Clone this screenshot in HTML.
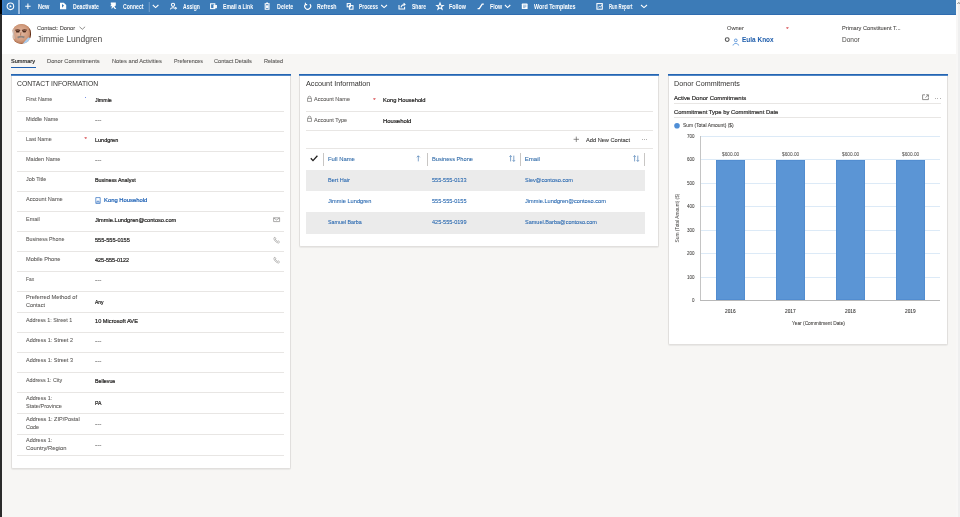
<!DOCTYPE html>
<html><head><meta charset="utf-8"><style>
html,body{margin:0;padding:0;}
body{width:960px;height:517px;overflow:hidden;position:relative;background:#f7f6f4;font-family:"Liberation Sans", sans-serif;}
.t{position:absolute;white-space:nowrap;}
svg{position:absolute;overflow:visible;}
</style></head><body><div id="w" style="position:absolute;left:0;top:0;width:960px;height:517px;will-change:transform">
<div style="position:absolute;left:0px;top:0px;width:2px;height:517px;background:#2b2b2b"></div>
<div style="position:absolute;left:0px;top:0px;width:2px;height:14px;background:#000"></div>
<div style="position:absolute;left:956px;top:0px;width:4px;height:517px;background:#efefef"></div>
<div style="position:absolute;left:956px;top:0px;width:1.5px;height:517px;background:#f8f7f6"></div>
<svg style="left:957px;top:1px" width="3" height="4" viewBox="0 0 3 4"><path d="M0.4 3 L1.8 1.4 L3.2 3" stroke="#777" stroke-width="0.9" fill="none"/></svg>
<div style="position:absolute;left:2px;top:0px;width:954px;height:14px;background:#3c7bb7"></div>
<div style="position:absolute;left:2px;top:14px;width:954px;height:1px;background:#2f6caf"></div>
<div style="position:absolute;left:2px;top:0px;width:2px;height:14px;background:#3f80c4"></div>
<div style="position:absolute;left:18px;top:0px;width:2px;height:14px;background:#9cbde0"></div>
<div style="position:absolute;left:20px;top:0px;width:1px;height:14px;background:#316fb0"></div>
<div style="position:absolute;left:2px;top:15px;width:954px;height:39px;background:#fff"></div>
<div class="t" style="left:37.50px;top:4.00px;font-size:6.3px;line-height:6.3px;color:#ffffff;font-weight:700;transform:scaleX(0.8813);transform-origin:0 0;">New</div>
<div class="t" style="left:72.50px;top:4.00px;font-size:6.3px;line-height:6.3px;color:#ffffff;font-weight:700;transform:scaleX(0.8219);transform-origin:0 0;">Deactivate</div>
<div class="t" style="left:122.50px;top:4.00px;font-size:6.3px;line-height:6.3px;color:#ffffff;font-weight:700;transform:scaleX(0.8126);transform-origin:0 0;">Connect</div>
<div class="t" style="left:182.90px;top:4.00px;font-size:6.3px;line-height:6.3px;color:#ffffff;font-weight:700;transform:scaleX(0.7992);transform-origin:0 0;">Assign</div>
<div class="t" style="left:222.80px;top:4.00px;font-size:6.3px;line-height:6.3px;color:#ffffff;font-weight:700;transform:scaleX(0.8163);transform-origin:0 0;">Email a Link</div>
<div class="t" style="left:276.60px;top:4.00px;font-size:6.3px;line-height:6.3px;color:#ffffff;font-weight:700;transform:scaleX(0.8558);transform-origin:0 0;">Delete</div>
<div class="t" style="left:316.60px;top:4.00px;font-size:6.3px;line-height:6.3px;color:#ffffff;font-weight:700;transform:scaleX(0.8347);transform-origin:0 0;">Refresh</div>
<div class="t" style="left:359.00px;top:4.00px;font-size:6.3px;line-height:6.3px;color:#ffffff;font-weight:700;transform:scaleX(0.7759);transform-origin:0 0;">Process</div>
<div class="t" style="left:411.60px;top:4.00px;font-size:6.3px;line-height:6.3px;color:#ffffff;font-weight:700;transform:scaleX(0.8000);transform-origin:0 0;">Share</div>
<div class="t" style="left:449.00px;top:4.00px;font-size:6.3px;line-height:6.3px;color:#ffffff;font-weight:700;transform:scaleX(0.8484);transform-origin:0 0;">Follow</div>
<div class="t" style="left:489.50px;top:4.00px;font-size:6.3px;line-height:6.3px;color:#ffffff;font-weight:700;transform:scaleX(0.8447);transform-origin:0 0;">Flow</div>
<div class="t" style="left:534.00px;top:4.00px;font-size:6.3px;line-height:6.3px;color:#ffffff;font-weight:700;transform:scaleX(0.8589);transform-origin:0 0;">Word Templates</div>
<div class="t" style="left:608.80px;top:4.00px;font-size:6.3px;line-height:6.3px;color:#ffffff;font-weight:700;transform:scaleX(0.6822);transform-origin:0 0;">Run Report</div>
<svg style="left:0px;top:0px" width="960" height="14" viewBox="0 0 960 14"><circle cx="10.4" cy="6.3" r="3.3" stroke="#fff" stroke-width="1.05" fill="none"/><path d="M9.6 4.8 L11.8 6.3 L9.6 7.8Z" fill="#fff"/><path d="M27.9 3.6 V9 M25.2 6.3 H30.6" stroke="#fff" stroke-width="1.05" fill="none"/><path d="M60 2.8 H63.8 L66.2 5 V9.2 H60Z" fill="#fff"/><path d="M62 4 V7.8 L64 5.6Z" fill="#3c7bb7"/><path d="M110.8 2.6 H115.8 V5.6 L114.4 6.4 L116.3 9 H114.8 L113.2 7 L112.2 8.6 H111.2 L112.2 6.2 L110.2 6.2 L111.4 4.6 L110.8 4.2Z" fill="#fff"/><path d="M152.8 5 L155.6 7.6 L158.4 5" stroke="#fff" stroke-width="1.05" fill="none"/><rect x="148.8" y="2" width="0.8" height="10" fill="#7fa6d3"/><circle cx="173" cy="4.8" r="1.6" stroke="#fff" stroke-width="1.05" fill="none"/><path d="M170.4 9.3 C170.8 7.2 175.2 7.2 175.6 9.3 M175.3 7.2 L176.8 8.7" stroke="#fff" stroke-width="1.05" fill="none"/><rect x="210.6" y="3.8" width="4.2" height="4.8" stroke="#fff" stroke-width="1.05" fill="none"/><rect x="213.4" y="5" width="3.6" height="3.2" fill="#fff" opacity="0.9"/><path d="M264.6 3.8 H269.6 M265.2 3.8 V9.2 H269 V3.8 M266.2 2.9 H268 M266.6 5.2 V8 M267.7 5.2 V8" stroke="#fff" stroke-width="1.05" fill="none"/><path d="M309.9 4.2 A3 3 0 1 1 305.6 4.1 M305.4 2.8 V4.6 H307.2" stroke="#fff" stroke-width="1.05" fill="none"/><rect x="347.2" y="3.6" width="3.2" height="3.2" stroke="#fff" stroke-width="1.05" fill="none"/><rect x="349.4" y="5.6" width="3.6" height="3.6" stroke="#fff" stroke-width="1.05" fill="none"/><path d="M381.2 5 L384.1 7.6 L387 5" stroke="#fff" stroke-width="1.05" fill="none"/><path d="M399 5 V9 H404.6 V6.8 M401 7.4 C401.4 5 403 4.4 405 4.4 M403.6 3.2 L405 4.4 L403.6 5.6" stroke="#fff" stroke-width="1.05" fill="none"/><path d="M440 3 L440.9 5.3 L443.3 5.4 L441.4 6.9 L442.1 9.3 L440 7.9 L437.9 9.3 L438.6 6.9 L436.7 5.4 L439.1 5.3Z" stroke="#fff" stroke-width="1.05" fill="none"/><path d="M477.6 8.6 L479.3 8.6 L482.2 4.2 L483.8 4.2" stroke="#fff" stroke-width="1.3" fill="none"/><path d="M504.9 5 L507.6 7.6 L510.3 5" stroke="#fff" stroke-width="1.05" fill="none"/><rect x="521.8" y="3.6" width="5.8" height="5.4" rx="0.6" fill="#fff"/><path d="M523 5.2 H526.4 M523 6.4 H526.4 M523 7.6 H525.4" stroke="#3c7bb7" stroke-width="0.5"/><rect x="596.9" y="3.6" width="5.4" height="5.6" stroke="#fff" stroke-width="1.05" fill="none"/><path d="M598.2 7.6 L599.4 6.2 L600.6 7 L601.8 4.8" stroke="#fff" stroke-width="0.8" fill="none"/><path d="M641 5 L644 7.6 L647 5" stroke="#fff" stroke-width="1.05" fill="none"/></svg>
<div style="position:absolute;left:11.7px;top:24.4px;width:19.8px;height:19.8px;border-radius:50%;overflow:hidden;background:#cf9778"><svg style="left:-0.7px;top:-0.4px;filter:blur(0.35px)" width="21" height="21" viewBox="0 0 21 21"><defs><radialGradient id="sk" cx="0.45" cy="0.42" r="0.62"><stop offset="0" stop-color="#e4bca6"/><stop offset="0.6" stop-color="#d09a7c"/><stop offset="1" stop-color="#a8643f"/></radialGradient></defs><rect width="21" height="21" fill="url(#sk)"/><path d="M0 3 Q3.6 10 1.8 19 L0 19Z" fill="#f4f1ef"/><path d="M2.8 5 Q2.2 10 3.4 15" stroke="#cbbfb8" stroke-width="1" fill="none"/><path d="M19 2.5 Q21.6 9 19.2 16" stroke="#5e2c16" stroke-width="2.6" fill="none"/><path d="M4.4 6.4 Q6.8 5.2 9.2 6.5 M11 6.5 Q13.4 5.2 15.8 6.3" stroke="#5a3222" stroke-width="1.2" fill="none"/><ellipse cx="6.8" cy="7.7" rx="1.9" ry="0.9" fill="#4a2a1c"/><ellipse cx="13.3" cy="7.6" rx="1.9" ry="0.9" fill="#4a2a1c"/><path d="M10 8.2 L9.5 11.5" stroke="#b47454" stroke-width="1" fill="none"/><path d="M6.6 13.6 Q10 11.8 13.4 13.4" stroke="#8c827c" stroke-width="1.8" fill="none"/><path d="M3 17.5 Q8 21.5 13 19.5" stroke="#9c5c3c" stroke-width="1.5" fill="none"/><path d="M10.5 21 L17.2 13.6 L21 14 L21 21Z" fill="#a8cdf0"/></svg></div>
<div class="t" style="left:36.90px;top:25.00px;font-size:6.1px;line-height:6.1px;color:#484644;font-weight:400;-webkit-text-stroke:0.08px #484644;transform:scaleX(0.9303);transform-origin:0 0;">Contact: Donor</div>
<svg style="left:79px;top:25.5px" width="7" height="4" viewBox="0 0 7 4"><path d="M0.5 0.8 L3.3 3.3 L6.1 0.8" stroke="#605e5c" stroke-width="0.7" fill="none"/></svg>
<div class="t" style="left:37.00px;top:34.00px;font-size:9.6px;line-height:9.6px;color:#4a4846;font-weight:400;transform:scaleX(0.8860);transform-origin:0 0;">Jimmie Lundgren</div>
<div class="t" style="left:726.90px;top:25.00px;font-size:6.1px;line-height:6.1px;color:#484644;font-weight:400;-webkit-text-stroke:0.08px #484644;transform:scaleX(0.9404);transform-origin:0 0;">Owner</div>
<div class="t" style="left:786.20px;top:26.00px;font-size:6px;line-height:6px;color:#d13438;font-weight:400;-webkit-text-stroke:0.08px #d13438;">*</div>
<div class="t" style="left:841.50px;top:25.00px;font-size:6.1px;line-height:6.1px;color:#484644;font-weight:400;-webkit-text-stroke:0.08px #484644;transform:scaleX(0.9256);transform-origin:0 0;">Primary Constituent T...</div>
<svg style="left:724px;top:36.5px" width="18" height="9" viewBox="0 0 18 9"><circle cx="3.2" cy="2.6" r="1.9" stroke="#555" stroke-width="1.1" fill="none"/><circle cx="11.8" cy="3.4" r="1.4" stroke="#2f7ad0" stroke-width="0.7" fill="none"/><path d="M9 8.5 C9.3 5.8 14.3 5.8 14.6 8.5" stroke="#2f7ad0" stroke-width="0.7" fill="none"/></svg>
<div class="t" style="left:741.70px;top:36.00px;font-size:7.3px;line-height:7.3px;color:#1d5cab;font-weight:700;transform:scaleX(0.8871);transform-origin:0 0;">Eula Knox</div>
<div class="t" style="left:841.50px;top:36.00px;font-size:7.3px;line-height:7.3px;color:#484644;font-weight:400;transform:scaleX(0.8951);transform-origin:0 0;">Donor</div>
<div class="t" style="left:10.80px;top:58.00px;font-size:6.1px;line-height:6.1px;color:#323130;font-weight:400;-webkit-text-stroke:0.22px #323130;transform:scaleX(0.9177);transform-origin:0 0;">Summary</div>
<div style="position:absolute;left:10.8px;top:66.8px;width:24.8px;height:1.5px;background:#1f5faf"></div>
<div class="t" style="left:47.30px;top:58.00px;font-size:6.1px;line-height:6.1px;color:#555351;font-weight:400;-webkit-text-stroke:0.08px #555351;transform:scaleX(0.9440);transform-origin:0 0;">Donor Commitments</div>
<div class="t" style="left:111.90px;top:58.00px;font-size:6.1px;line-height:6.1px;color:#555351;font-weight:400;-webkit-text-stroke:0.08px #555351;transform:scaleX(0.9352);transform-origin:0 0;">Notes and Activities</div>
<div class="t" style="left:173.50px;top:58.00px;font-size:6.1px;line-height:6.1px;color:#555351;font-weight:400;-webkit-text-stroke:0.08px #555351;transform:scaleX(0.8839);transform-origin:0 0;">Preferences</div>
<div class="t" style="left:214.20px;top:58.00px;font-size:6.1px;line-height:6.1px;color:#555351;font-weight:400;-webkit-text-stroke:0.08px #555351;transform:scaleX(0.9158);transform-origin:0 0;">Contact Details</div>
<div class="t" style="left:264.00px;top:58.00px;font-size:6.1px;line-height:6.1px;color:#555351;font-weight:400;-webkit-text-stroke:0.08px #555351;transform:scaleX(0.9071);transform-origin:0 0;">Related</div>
<div style="position:absolute;left:10.8px;top:73.5px;width:279.8px;height:395.8px;background:#fff;border:1px solid #e1dfdd;border-top:none;box-sizing:border-box;border-radius:0 0 2px 2px;box-shadow:0 0.5px 1px rgba(0,0,0,0.06)"></div>
<div style="position:absolute;left:10.8px;top:74px;width:279.8px;height:1px;background:#2565b2"></div>
<div style="position:absolute;left:10.8px;top:75px;width:279.8px;height:1px;background:#4f86c6"></div>
<div style="position:absolute;left:299px;top:73.5px;width:360px;height:173.5px;background:#fff;border:1px solid #e1dfdd;border-top:none;box-sizing:border-box;border-radius:0 0 2px 2px;box-shadow:0 0.5px 1px rgba(0,0,0,0.06)"></div>
<div style="position:absolute;left:299px;top:74px;width:360px;height:1px;background:#2565b2"></div>
<div style="position:absolute;left:299px;top:75px;width:360px;height:1px;background:#4f86c6"></div>
<div style="position:absolute;left:667.5px;top:73.5px;width:280px;height:271.5px;background:#fff;border:1px solid #e1dfdd;border-top:none;box-sizing:border-box;border-radius:0 0 2px 2px;box-shadow:0 0.5px 1px rgba(0,0,0,0.06)"></div>
<div style="position:absolute;left:667.5px;top:74px;width:280px;height:1px;background:#2565b2"></div>
<div style="position:absolute;left:667.5px;top:75px;width:280px;height:1px;background:#4f86c6"></div>
<div class="t" style="left:16.90px;top:80.00px;font-size:7.0px;line-height:7.0px;color:#323130;font-weight:400;transform:scaleX(0.9704);transform-origin:0 0;">CONTACT INFORMATION</div>
<div style="position:absolute;left:17px;top:110.5px;width:267px;height:1px;background:#e8e6e4"></div>
<div style="position:absolute;left:17px;top:130.5px;width:267px;height:1px;background:#e8e6e4"></div>
<div style="position:absolute;left:17px;top:150.5px;width:267px;height:1px;background:#e8e6e4"></div>
<div style="position:absolute;left:17px;top:170.5px;width:267px;height:1px;background:#e8e6e4"></div>
<div style="position:absolute;left:17px;top:190.5px;width:267px;height:1px;background:#e8e6e4"></div>
<div style="position:absolute;left:17px;top:210.5px;width:267px;height:1px;background:#e8e6e4"></div>
<div style="position:absolute;left:17px;top:230.5px;width:267px;height:1px;background:#e8e6e4"></div>
<div style="position:absolute;left:17px;top:250.5px;width:267px;height:1px;background:#e8e6e4"></div>
<div style="position:absolute;left:17px;top:270.5px;width:267px;height:1px;background:#e8e6e4"></div>
<div style="position:absolute;left:17px;top:290.5px;width:267px;height:1px;background:#e8e6e4"></div>
<div style="position:absolute;left:17px;top:311.5px;width:267px;height:1px;background:#e8e6e4"></div>
<div style="position:absolute;left:17px;top:331.5px;width:267px;height:1px;background:#e8e6e4"></div>
<div style="position:absolute;left:17px;top:351.5px;width:267px;height:1px;background:#e8e6e4"></div>
<div style="position:absolute;left:17px;top:371.5px;width:267px;height:1px;background:#e8e6e4"></div>
<div style="position:absolute;left:17px;top:391.5px;width:267px;height:1px;background:#e8e6e4"></div>
<div style="position:absolute;left:17px;top:412.5px;width:267px;height:1px;background:#e8e6e4"></div>
<div style="position:absolute;left:17px;top:433.5px;width:267px;height:1px;background:#e8e6e4"></div>
<div style="position:absolute;left:17px;top:454.5px;width:267px;height:1px;background:#e8e6e4"></div>
<div class="t" style="left:25.60px;top:96.00px;font-size:6.1px;line-height:6.1px;color:#5a5856;font-weight:400;-webkit-text-stroke:0.08px #5a5856;transform:scaleX(0.8847);transform-origin:0 0;">First Name</div>
<div class="t" style="left:94.60px;top:97.00px;font-size:6.1px;line-height:6.1px;color:#201f1e;font-weight:400;-webkit-text-stroke:0.22px #201f1e;transform:scaleX(0.8690);transform-origin:0 0;">Jimmie</div>
<div class="t" style="left:25.60px;top:116.00px;font-size:6.1px;line-height:6.1px;color:#5a5856;font-weight:400;-webkit-text-stroke:0.08px #5a5856;transform:scaleX(0.9000);transform-origin:0 0;">Middle Name</div>
<div class="t" style="left:94.60px;top:117.00px;font-size:6.1px;line-height:6.1px;color:#323130;font-weight:400;-webkit-text-stroke:0.08px #323130;transform:scaleX(1.0564);transform-origin:0 0;">---</div>
<div class="t" style="left:25.60px;top:136.00px;font-size:6.1px;line-height:6.1px;color:#5a5856;font-weight:400;-webkit-text-stroke:0.08px #5a5856;transform:scaleX(0.8711);transform-origin:0 0;">Last Name</div>
<div class="t" style="left:94.60px;top:137.00px;font-size:6.1px;line-height:6.1px;color:#201f1e;font-weight:400;-webkit-text-stroke:0.22px #201f1e;transform:scaleX(0.9000);transform-origin:0 0;">Lundgren</div>
<div class="t" style="left:25.60px;top:156.00px;font-size:6.1px;line-height:6.1px;color:#5a5856;font-weight:400;-webkit-text-stroke:0.08px #5a5856;transform:scaleX(0.9080);transform-origin:0 0;">Maiden Name</div>
<div class="t" style="left:94.60px;top:157.00px;font-size:6.1px;line-height:6.1px;color:#323130;font-weight:400;-webkit-text-stroke:0.08px #323130;transform:scaleX(1.0564);transform-origin:0 0;">---</div>
<div class="t" style="left:25.60px;top:176.00px;font-size:6.1px;line-height:6.1px;color:#5a5856;font-weight:400;-webkit-text-stroke:0.08px #5a5856;transform:scaleX(0.8926);transform-origin:0 0;">Job Title</div>
<div class="t" style="left:94.60px;top:177.00px;font-size:6.1px;line-height:6.1px;color:#201f1e;font-weight:400;-webkit-text-stroke:0.22px #201f1e;transform:scaleX(0.8821);transform-origin:0 0;">Business Analyst</div>
<div class="t" style="left:25.60px;top:196.00px;font-size:6.1px;line-height:6.1px;color:#5a5856;font-weight:400;-webkit-text-stroke:0.08px #5a5856;transform:scaleX(0.9192);transform-origin:0 0;">Account Name</div>
<svg style="left:94.5px;top:197px" width="7" height="7" viewBox="0 0 7 7"><path d="M0.8 0.6 H5.2 V6.4 H0.8Z M2 6.4 V4.2 H4 V6.4" stroke="#2f6fc0" stroke-width="0.7" fill="none"/></svg>
<div class="t" style="left:104.20px;top:197.00px;font-size:6.1px;line-height:6.1px;color:#1f62b5;font-weight:400;-webkit-text-stroke:0.22px #1f62b5;transform:scaleX(0.9581);transform-origin:0 0;">Kong Household</div>
<div class="t" style="left:25.60px;top:216.00px;font-size:6.1px;line-height:6.1px;color:#5a5856;font-weight:400;-webkit-text-stroke:0.08px #5a5856;transform:scaleX(0.9003);transform-origin:0 0;">Email</div>
<div class="t" style="left:94.60px;top:217.00px;font-size:6.1px;line-height:6.1px;color:#201f1e;font-weight:400;-webkit-text-stroke:0.22px #201f1e;transform:scaleX(0.9291);transform-origin:0 0;">Jimmie.Lundgren@contoso.com</div>
<div class="t" style="left:25.60px;top:236.00px;font-size:6.1px;line-height:6.1px;color:#5a5856;font-weight:400;-webkit-text-stroke:0.08px #5a5856;transform:scaleX(0.8712);transform-origin:0 0;">Business Phone</div>
<div class="t" style="left:94.60px;top:237.00px;font-size:6.1px;line-height:6.1px;color:#201f1e;font-weight:400;-webkit-text-stroke:0.22px #201f1e;transform:scaleX(0.9180);transform-origin:0 0;">555-555-0155</div>
<div class="t" style="left:25.60px;top:256.00px;font-size:6.1px;line-height:6.1px;color:#5a5856;font-weight:400;-webkit-text-stroke:0.08px #5a5856;transform:scaleX(0.9241);transform-origin:0 0;">Mobile Phone</div>
<div class="t" style="left:94.60px;top:257.00px;font-size:6.1px;line-height:6.1px;color:#201f1e;font-weight:400;-webkit-text-stroke:0.22px #201f1e;transform:scaleX(0.9000);transform-origin:0 0;">425-555-0122</div>
<div class="t" style="left:25.60px;top:276.00px;font-size:6.1px;line-height:6.1px;color:#5a5856;font-weight:400;-webkit-text-stroke:0.08px #5a5856;transform:scaleX(0.8011);transform-origin:0 0;">Fax</div>
<div class="t" style="left:94.60px;top:277.00px;font-size:6.1px;line-height:6.1px;color:#323130;font-weight:400;-webkit-text-stroke:0.08px #323130;transform:scaleX(1.0564);transform-origin:0 0;">---</div>
<div class="t" style="left:25.60px;top:294.00px;font-size:6.1px;line-height:6.1px;color:#5a5856;font-weight:400;-webkit-text-stroke:0.08px #5a5856;transform:scaleX(0.9412);transform-origin:0 0;">Preferred Method of</div>
<div class="t" style="left:25.60px;top:302.00px;font-size:6.1px;line-height:6.1px;color:#5a5856;font-weight:400;-webkit-text-stroke:0.08px #5a5856;transform:scaleX(0.9011);transform-origin:0 0;">Contact</div>
<div class="t" style="left:94.60px;top:299.00px;font-size:6.1px;line-height:6.1px;color:#201f1e;font-weight:400;-webkit-text-stroke:0.22px #201f1e;transform:scaleX(0.8207);transform-origin:0 0;">Any</div>
<div class="t" style="left:25.60px;top:317.00px;font-size:6.1px;line-height:6.1px;color:#5a5856;font-weight:400;-webkit-text-stroke:0.08px #5a5856;transform:scaleX(0.8849);transform-origin:0 0;">Address 1: Street 1</div>
<div class="t" style="left:94.60px;top:318.00px;font-size:6.1px;line-height:6.1px;color:#201f1e;font-weight:400;-webkit-text-stroke:0.22px #201f1e;transform:scaleX(0.9268);transform-origin:0 0;">10 Microsoft AVE</div>
<div class="t" style="left:25.60px;top:337.00px;font-size:6.1px;line-height:6.1px;color:#5a5856;font-weight:400;-webkit-text-stroke:0.08px #5a5856;transform:scaleX(0.9000);transform-origin:0 0;">Address 1: Street 2</div>
<div class="t" style="left:94.60px;top:338.00px;font-size:6.1px;line-height:6.1px;color:#323130;font-weight:400;-webkit-text-stroke:0.08px #323130;transform:scaleX(1.0564);transform-origin:0 0;">---</div>
<div class="t" style="left:25.60px;top:357.00px;font-size:6.1px;line-height:6.1px;color:#5a5856;font-weight:400;-webkit-text-stroke:0.08px #5a5856;transform:scaleX(0.9000);transform-origin:0 0;">Address 1: Street 3</div>
<div class="t" style="left:94.60px;top:358.00px;font-size:6.1px;line-height:6.1px;color:#323130;font-weight:400;-webkit-text-stroke:0.08px #323130;transform:scaleX(1.0564);transform-origin:0 0;">---</div>
<div class="t" style="left:25.60px;top:377.00px;font-size:6.1px;line-height:6.1px;color:#5a5856;font-weight:400;-webkit-text-stroke:0.08px #5a5856;transform:scaleX(0.8777);transform-origin:0 0;">Address 1: City</div>
<div class="t" style="left:94.60px;top:378.00px;font-size:6.1px;line-height:6.1px;color:#201f1e;font-weight:400;-webkit-text-stroke:0.22px #201f1e;transform:scaleX(0.8672);transform-origin:0 0;">Bellevue</div>
<div class="t" style="left:25.60px;top:395.00px;font-size:6.1px;line-height:6.1px;color:#5a5856;font-weight:400;-webkit-text-stroke:0.08px #5a5856;transform:scaleX(0.9000);transform-origin:0 0;">Address 1:</div>
<div class="t" style="left:25.60px;top:403.00px;font-size:6.1px;line-height:6.1px;color:#5a5856;font-weight:400;-webkit-text-stroke:0.08px #5a5856;transform:scaleX(0.9070);transform-origin:0 0;">State/Province</div>
<div class="t" style="left:94.60px;top:400.00px;font-size:6.1px;line-height:6.1px;color:#201f1e;font-weight:400;-webkit-text-stroke:0.22px #201f1e;transform:scaleX(0.8477);transform-origin:0 0;">PA</div>
<div class="t" style="left:25.60px;top:416.00px;font-size:6.1px;line-height:6.1px;color:#5a5856;font-weight:400;-webkit-text-stroke:0.08px #5a5856;transform:scaleX(0.9099);transform-origin:0 0;">Address 1: ZIP/Postal</div>
<div class="t" style="left:25.60px;top:424.00px;font-size:6.1px;line-height:6.1px;color:#5a5856;font-weight:400;-webkit-text-stroke:0.08px #5a5856;transform:scaleX(0.9000);transform-origin:0 0;">Code</div>
<div class="t" style="left:94.60px;top:421.00px;font-size:6.1px;line-height:6.1px;color:#323130;font-weight:400;-webkit-text-stroke:0.08px #323130;transform:scaleX(1.0564);transform-origin:0 0;">---</div>
<div class="t" style="left:25.60px;top:437.00px;font-size:6.1px;line-height:6.1px;color:#5a5856;font-weight:400;-webkit-text-stroke:0.08px #5a5856;transform:scaleX(0.9000);transform-origin:0 0;">Address 1:</div>
<div class="t" style="left:25.60px;top:445.00px;font-size:6.1px;line-height:6.1px;color:#5a5856;font-weight:400;-webkit-text-stroke:0.08px #5a5856;transform:scaleX(0.9535);transform-origin:0 0;">Country/Region</div>
<div class="t" style="left:94.60px;top:442.00px;font-size:6.1px;line-height:6.1px;color:#323130;font-weight:400;-webkit-text-stroke:0.08px #323130;transform:scaleX(1.0564);transform-origin:0 0;">---</div>
<div style="position:absolute;left:85.2px;top:96.8px;width:1px;height:1px;background:#4a6ee0;border-radius:50%"></div>
<div class="t" style="left:84.60px;top:136.00px;font-size:6px;line-height:6px;color:#d13438;font-weight:400;-webkit-text-stroke:0.08px #d13438;">*</div>
<svg style="left:273px;top:217px" width="8" height="7" viewBox="0 0 8 7"><path d="M0.6 0.8 H6.6 V4.6 H0.6Z M0.6 0.8 L3.6 3 L6.6 0.8" stroke="#8a8886" stroke-width="0.7" fill="none"/></svg>
<svg style="left:273px;top:236.5px" width="8" height="7" viewBox="0 0 8 7"><path d="M1 0.8 C0.5 2.5 2.5 5.5 5.5 6 L6.6 5 L5.2 3.8 L4.4 4.4 C3.5 4 2.6 3 2.2 2 L2.8 1.4 L1.8 0.2Z" stroke="#8a8886" stroke-width="0.6" fill="none"/></svg>
<svg style="left:273px;top:256.5px" width="8" height="7" viewBox="0 0 8 7"><path d="M1 0.8 C0.5 2.5 2.5 5.5 5.5 6 L6.6 5 L5.2 3.8 L4.4 4.4 C3.5 4 2.6 3 2.2 2 L2.8 1.4 L1.8 0.2Z" stroke="#8a8886" stroke-width="0.6" fill="none"/></svg>
<div class="t" style="left:305.50px;top:80.00px;font-size:7.0px;line-height:7.0px;color:#323130;font-weight:400;transform:scaleX(1.0343);transform-origin:0 0;">Account Information</div>
<svg style="left:306.8px;top:95.6px" width="5" height="6" viewBox="0 0 5 6"><path d="M1.1 2.4 V1.6 A1.4 1.4 0 0 1 3.9 1.6 V2.4 M0.5 2.4 H4.5 V5.4 H0.5Z" stroke="#605e5c" stroke-width="0.6" fill="none"/></svg>
<div class="t" style="left:313.90px;top:96.00px;font-size:6.1px;line-height:6.1px;color:#5a5856;font-weight:400;-webkit-text-stroke:0.08px #5a5856;transform:scaleX(0.9000);transform-origin:0 0;">Account Name</div>
<div class="t" style="left:382.80px;top:97.00px;font-size:6.1px;line-height:6.1px;color:#201f1e;font-weight:400;-webkit-text-stroke:0.22px #201f1e;transform:scaleX(0.9447);transform-origin:0 0;">Kong  Household</div>
<svg style="left:306.8px;top:116.3px" width="5" height="6" viewBox="0 0 5 6"><path d="M1.1 2.4 V1.6 A1.4 1.4 0 0 1 3.9 1.6 V2.4 M0.5 2.4 H4.5 V5.4 H0.5Z" stroke="#605e5c" stroke-width="0.6" fill="none"/></svg>
<div class="t" style="left:313.90px;top:117.00px;font-size:6.1px;line-height:6.1px;color:#5a5856;font-weight:400;-webkit-text-stroke:0.08px #5a5856;transform:scaleX(0.9000);transform-origin:0 0;">Account Type</div>
<div class="t" style="left:382.80px;top:118.00px;font-size:6.1px;line-height:6.1px;color:#201f1e;font-weight:400;-webkit-text-stroke:0.22px #201f1e;transform:scaleX(0.9740);transform-origin:0 0;">Household</div>
<div class="t" style="left:373.20px;top:97.00px;font-size:6px;line-height:6px;color:#d13438;font-weight:400;-webkit-text-stroke:0.08px #d13438;">*</div>
<div style="position:absolute;left:305.5px;top:110.7px;width:347.5px;height:1px;background:#e8e6e4"></div>
<div style="position:absolute;left:305.5px;top:130.2px;width:347.5px;height:1px;background:#e8e6e4"></div>
<svg style="left:573px;top:136px" width="7" height="7" viewBox="0 0 7 7"><path d="M3.3 0.6 V6 M0.6 3.3 H6" stroke="#605e5c" stroke-width="0.7"/></svg>
<div class="t" style="left:585.70px;top:137.00px;font-size:6.1px;line-height:6.1px;color:#323130;font-weight:400;-webkit-text-stroke:0.08px #323130;transform:scaleX(0.9282);transform-origin:0 0;">Add New Contact</div>
<div style="position:absolute;left:641.8000000000001px;top:139.1px;width:0.8px;height:0.8px;background:#8a8886;border-radius:50%"></div>
<div style="position:absolute;left:644.0px;top:139.1px;width:0.8px;height:0.8px;background:#8a8886;border-radius:50%"></div>
<div style="position:absolute;left:646.2px;top:139.1px;width:0.8px;height:0.8px;background:#8a8886;border-radius:50%"></div>
<div style="position:absolute;left:305.5px;top:147.6px;width:347.5px;height:1px;background:#e8e6e4"></div>
<svg style="left:310px;top:155px" width="9" height="7" viewBox="0 0 9 7"><path d="M0.8 3.2 L3 5.6 L7.4 0.8" stroke="#201f1e" stroke-width="1.3" fill="none"/></svg>
<div style="position:absolute;left:323.20000000000005px;top:153px;width:0.9px;height:12.5px;background:#c8c6c4"></div>
<div style="position:absolute;left:426.6px;top:153px;width:0.9px;height:12.5px;background:#c8c6c4"></div>
<div style="position:absolute;left:520.0px;top:153px;width:0.9px;height:12.5px;background:#c8c6c4"></div>
<div style="position:absolute;left:643.9px;top:153px;width:0.9px;height:12.5px;background:#c8c6c4"></div>
<div class="t" style="left:328.00px;top:156.00px;font-size:6.1px;line-height:6.1px;color:#2b67a6;font-weight:400;-webkit-text-stroke:0.08px #2b67a6;transform:scaleX(0.9691);transform-origin:0 0;">Full Name</div>
<div class="t" style="left:431.90px;top:156.00px;font-size:6.1px;line-height:6.1px;color:#2b67a6;font-weight:400;-webkit-text-stroke:0.08px #2b67a6;transform:scaleX(0.9294);transform-origin:0 0;">Business Phone</div>
<div class="t" style="left:524.70px;top:156.00px;font-size:6.1px;line-height:6.1px;color:#2b67a6;font-weight:400;-webkit-text-stroke:0.08px #2b67a6;">Email</div>
<svg style="left:416px;top:155px" width="5" height="7" viewBox="0 0 5 7"><path d="M2.3 6.4 V0.8 M0.8 2.3 L2.3 0.8 L3.8 2.3" stroke="#2b67a6" stroke-width="0.6" fill="none"/></svg>
<svg style="left:508.7px;top:154.8px" width="7" height="7" viewBox="0 0 7 7"><path d="M1.6 6.4 V0.6 M0.4 1.8 L1.6 0.6 L2.8 1.8 M4.8 0.6 V6.4 M3.6 5.2 L4.8 6.4 L6 5.2" stroke="#2b67a6" stroke-width="0.6" fill="none"/></svg>
<svg style="left:632.8px;top:154.8px" width="7" height="7" viewBox="0 0 7 7"><path d="M1.6 6.4 V0.6 M0.4 1.8 L1.6 0.6 L2.8 1.8 M4.8 0.6 V6.4 M3.6 5.2 L4.8 6.4 L6 5.2" stroke="#2b67a6" stroke-width="0.6" fill="none"/></svg>
<div style="position:absolute;left:305.5px;top:170px;width:339px;height:21.1px;background:#ebebeb"></div>
<div style="position:absolute;left:305.5px;top:212.3px;width:339px;height:21.4px;background:#ebebeb"></div>
<div class="t" style="left:328.00px;top:177.00px;font-size:6.1px;line-height:6.1px;color:#2364ae;font-weight:400;-webkit-text-stroke:0.08px #2364ae;transform:scaleX(0.9120);transform-origin:0 0;">Bert Hair</div>
<div class="t" style="left:431.60px;top:177.00px;font-size:6.1px;line-height:6.1px;color:#2364ae;font-weight:400;-webkit-text-stroke:0.08px #2364ae;transform:scaleX(0.9103);transform-origin:0 0;">555-555-0133</div>
<div class="t" style="left:524.70px;top:177.00px;font-size:6.1px;line-height:6.1px;color:#2364ae;font-weight:400;-webkit-text-stroke:0.08px #2364ae;transform:scaleX(0.9103);transform-origin:0 0;">Siev@contoso.com</div>
<div class="t" style="left:328.00px;top:198.00px;font-size:6.1px;line-height:6.1px;color:#2364ae;font-weight:400;-webkit-text-stroke:0.08px #2364ae;transform:scaleX(0.9277);transform-origin:0 0;">Jimmie Lundgren</div>
<div class="t" style="left:431.60px;top:198.00px;font-size:6.1px;line-height:6.1px;color:#2364ae;font-weight:400;-webkit-text-stroke:0.08px #2364ae;transform:scaleX(0.9103);transform-origin:0 0;">555-555-0155</div>
<div class="t" style="left:524.70px;top:198.00px;font-size:6.1px;line-height:6.1px;color:#2364ae;font-weight:400;-webkit-text-stroke:0.08px #2364ae;transform:scaleX(0.9245);transform-origin:0 0;">Jimmie.Lundgren@contoso.com</div>
<div class="t" style="left:328.00px;top:219.00px;font-size:6.1px;line-height:6.1px;color:#2364ae;font-weight:400;-webkit-text-stroke:0.08px #2364ae;transform:scaleX(0.8744);transform-origin:0 0;">Samuel Barba</div>
<div class="t" style="left:431.60px;top:219.00px;font-size:6.1px;line-height:6.1px;color:#2364ae;font-weight:400;-webkit-text-stroke:0.08px #2364ae;transform:scaleX(0.9103);transform-origin:0 0;">425-555-0199</div>
<div class="t" style="left:524.70px;top:219.00px;font-size:6.1px;line-height:6.1px;color:#2364ae;font-weight:400;-webkit-text-stroke:0.08px #2364ae;transform:scaleX(0.9070);transform-origin:0 0;">Samuel.Barba@contoso.com</div>
<div class="t" style="left:673.80px;top:80.00px;font-size:7.0px;line-height:7.0px;color:#323130;font-weight:400;transform:scaleX(1.0266);transform-origin:0 0;">Donor Commitments</div>
<div class="t" style="left:673.80px;top:95.00px;font-size:6.1px;line-height:6.1px;color:#323130;font-weight:400;-webkit-text-stroke:0.22px #323130;transform:scaleX(0.9742);transform-origin:0 0;">Active Donor Commitments</div>
<div style="position:absolute;left:673.8px;top:103.4px;width:267.3px;height:1px;background:#e8e6e4"></div>
<div class="t" style="left:673.80px;top:109.00px;font-size:6.1px;line-height:6.1px;color:#323130;font-weight:400;-webkit-text-stroke:0.22px #323130;transform:scaleX(0.9635);transform-origin:0 0;">Commitment Type by Commitment Date</div>
<div style="position:absolute;left:673.8px;top:116.5px;width:267.3px;height:1px;background:#e8e6e4"></div>
<svg style="left:922px;top:94px" width="8" height="7" viewBox="0 0 8 7"><path d="M0.6 0.8 H3 M0.6 0.8 V5.6 H6.4 V3.4 M4.2 0.8 H6.4 V3 M6.4 0.8 L3.6 3.6" stroke="#605e5c" stroke-width="0.7" fill="none"/></svg>
<div style="position:absolute;left:934.6px;top:98px;width:0.8px;height:0.8px;background:#8a8886;border-radius:50%"></div>
<div style="position:absolute;left:937.2px;top:98px;width:0.8px;height:0.8px;background:#8a8886;border-radius:50%"></div>
<div style="position:absolute;left:939.8000000000001px;top:98px;width:0.8px;height:0.8px;background:#8a8886;border-radius:50%"></div>
<svg style="left:674px;top:122.8px" width="6" height="6" viewBox="0 0 6 6"><circle cx="3" cy="2.8" r="2.8" fill="#4f8ed6"/></svg>
<div class="t" style="left:682.60px;top:123.00px;font-size:5.0px;line-height:5.0px;color:#484644;font-weight:400;-webkit-text-stroke:0.08px #484644;transform:scaleX(0.9862);transform-origin:0 0;">Sum (Total Amount) ($)</div>
<div style="position:absolute;left:700.5px;top:276.5px;width:239.2px;height:1px;background:#dceaf7"></div>
<div class="t" style="left:686.89px;top:275.00px;font-size:5.0px;line-height:5.0px;color:#484644;font-weight:400;-webkit-text-stroke:0.08px #484644;transform:scaleX(0.9000);transform-origin:0 0;">100</div>
<div style="position:absolute;left:700.5px;top:253.0px;width:239.2px;height:1px;background:#dceaf7"></div>
<div class="t" style="left:686.89px;top:251.00px;font-size:5.0px;line-height:5.0px;color:#484644;font-weight:400;-webkit-text-stroke:0.08px #484644;transform:scaleX(0.9000);transform-origin:0 0;">200</div>
<div style="position:absolute;left:700.5px;top:229.5px;width:239.2px;height:1px;background:#dceaf7"></div>
<div class="t" style="left:686.89px;top:228.00px;font-size:5.0px;line-height:5.0px;color:#484644;font-weight:400;-webkit-text-stroke:0.08px #484644;transform:scaleX(0.9000);transform-origin:0 0;">300</div>
<div style="position:absolute;left:700.5px;top:206.0px;width:239.2px;height:1px;background:#dceaf7"></div>
<div class="t" style="left:686.89px;top:204.00px;font-size:5.0px;line-height:5.0px;color:#484644;font-weight:400;-webkit-text-stroke:0.08px #484644;transform:scaleX(0.9000);transform-origin:0 0;">400</div>
<div style="position:absolute;left:700.5px;top:182.5px;width:239.2px;height:1px;background:#dceaf7"></div>
<div class="t" style="left:686.89px;top:181.00px;font-size:5.0px;line-height:5.0px;color:#484644;font-weight:400;-webkit-text-stroke:0.08px #484644;transform:scaleX(0.9000);transform-origin:0 0;">500</div>
<div style="position:absolute;left:700.5px;top:159.0px;width:239.2px;height:1px;background:#dceaf7"></div>
<div class="t" style="left:686.89px;top:157.00px;font-size:5.0px;line-height:5.0px;color:#484644;font-weight:400;-webkit-text-stroke:0.08px #484644;transform:scaleX(0.9000);transform-origin:0 0;">600</div>
<div style="position:absolute;left:700.5px;top:135.5px;width:239.2px;height:1px;background:#dceaf7"></div>
<div class="t" style="left:686.89px;top:134.00px;font-size:5.0px;line-height:5.0px;color:#484644;font-weight:400;-webkit-text-stroke:0.08px #484644;transform:scaleX(0.9000);transform-origin:0 0;">700</div>
<div class="t" style="left:691.90px;top:298.00px;font-size:5.0px;line-height:5.0px;color:#484644;font-weight:400;-webkit-text-stroke:0.08px #484644;transform:scaleX(0.9000);transform-origin:0 0;">0</div>
<div style="position:absolute;left:715.8px;top:159.8px;width:29.2px;height:140.7px;background:#5b95d5;box-shadow:inset 0 0 0 0.5px #4a86cc"></div>
<div class="t" style="left:721.71px;top:152.00px;font-size:5.0px;line-height:5.0px;color:#605e5c;font-weight:400;-webkit-text-stroke:0.08px #605e5c;transform:scaleX(0.9500);transform-origin:0 0;">$600.00</div>
<div class="t" style="left:725.01px;top:309.00px;font-size:5.0px;line-height:5.0px;color:#323130;font-weight:400;-webkit-text-stroke:0.08px #323130;transform:scaleX(0.9500);transform-origin:0 0;">2016</div>
<div style="position:absolute;left:775.9px;top:159.8px;width:29.2px;height:140.7px;background:#5b95d5;box-shadow:inset 0 0 0 0.5px #4a86cc"></div>
<div class="t" style="left:781.81px;top:152.00px;font-size:5.0px;line-height:5.0px;color:#605e5c;font-weight:400;-webkit-text-stroke:0.08px #605e5c;transform:scaleX(0.9500);transform-origin:0 0;">$600.00</div>
<div class="t" style="left:785.11px;top:309.00px;font-size:5.0px;line-height:5.0px;color:#323130;font-weight:400;-webkit-text-stroke:0.08px #323130;transform:scaleX(0.9500);transform-origin:0 0;">2017</div>
<div style="position:absolute;left:835.6px;top:159.8px;width:29.2px;height:140.7px;background:#5b95d5;box-shadow:inset 0 0 0 0.5px #4a86cc"></div>
<div class="t" style="left:841.51px;top:152.00px;font-size:5.0px;line-height:5.0px;color:#605e5c;font-weight:400;-webkit-text-stroke:0.08px #605e5c;transform:scaleX(0.9500);transform-origin:0 0;">$600.00</div>
<div class="t" style="left:844.81px;top:309.00px;font-size:5.0px;line-height:5.0px;color:#323130;font-weight:400;-webkit-text-stroke:0.08px #323130;transform:scaleX(0.9500);transform-origin:0 0;">2018</div>
<div style="position:absolute;left:895.7px;top:159.8px;width:29.2px;height:140.7px;background:#5b95d5;box-shadow:inset 0 0 0 0.5px #4a86cc"></div>
<div class="t" style="left:901.61px;top:152.00px;font-size:5.0px;line-height:5.0px;color:#605e5c;font-weight:400;-webkit-text-stroke:0.08px #605e5c;transform:scaleX(0.9500);transform-origin:0 0;">$600.00</div>
<div class="t" style="left:904.91px;top:309.00px;font-size:5.0px;line-height:5.0px;color:#323130;font-weight:400;-webkit-text-stroke:0.08px #323130;transform:scaleX(0.9500);transform-origin:0 0;">2019</div>
<div style="position:absolute;left:699.8px;top:135.8px;width:1px;height:165.2px;background:#c4c4c4"></div>
<div style="position:absolute;left:699.8px;top:300px;width:240px;height:1px;background:#b8b8b8"></div>
<div class="t" style="left:792.14px;top:321.00px;font-size:5.0px;line-height:5.0px;color:#484644;font-weight:400;-webkit-text-stroke:0.08px #484644;transform:scaleX(0.9600);transform-origin:0 0;">Year (Commitment Date)</div>
<div class="t" style="left:677.3px;top:218px;font-size:5px;line-height:5px;color:#484644;transform:translate(-50%,-50%) rotate(-90deg) scaleX(0.95);">Sum (Total Amount) ($)</div>
</div></body></html>
